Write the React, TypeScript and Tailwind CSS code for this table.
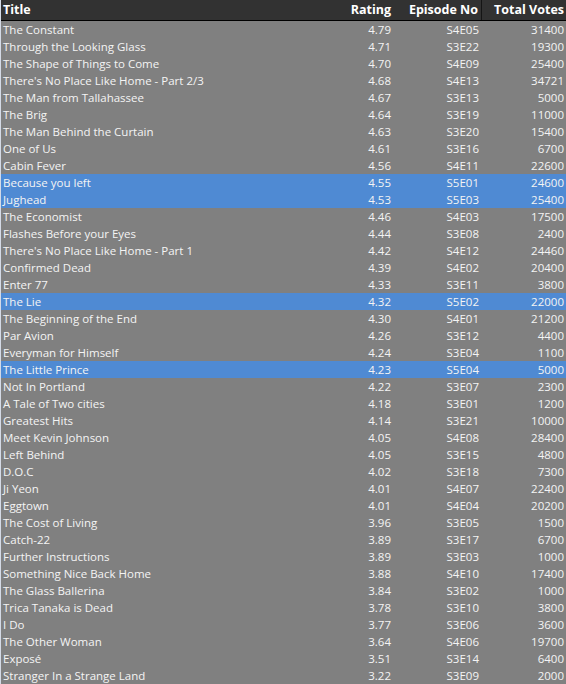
import React from "react";

type Row = [string, string, string, string, boolean?];

const rows: Row[] = [
  ["The Constant", "4.79", "S4E05", "31400"],
  ["Through the Looking Glass", "4.71", "S3E22", "19300"],
  ["The Shape of Things to Come", "4.70", "S4E09", "25400"],
  ["There's No Place Like Home - Part 2/3", "4.68", "S4E13", "34721"],
  ["The Man from Tallahassee", "4.67", "S3E13", "5000"],
  ["The Brig", "4.64", "S3E19", "11000"],
  ["The Man Behind the Curtain", "4.63", "S3E20", "15400"],
  ["One of Us", "4.61", "S3E16", "6700"],
  ["Cabin Fever", "4.56", "S4E11", "22600"],
  ["Because you left", "4.55", "S5E01", "24600", true],
  ["Jughead", "4.53", "S5E03", "25400", true],
  ["The Economist", "4.46", "S4E03", "17500"],
  ["Flashes Before your Eyes", "4.44", "S3E08", "2400"],
  ["There's No Place Like Home - Part 1", "4.42", "S4E12", "24460"],
  ["Confirmed Dead", "4.39", "S4E02", "20400"],
  ["Enter 77", "4.33", "S3E11", "3800"],
  ["The Lie", "4.32", "S5E02", "22000", true],
  ["The Beginning of the End", "4.30", "S4E01", "21200"],
  ["Par Avion", "4.26", "S3E12", "4400"],
  ["Everyman for Himself", "4.24", "S3E04", "1100"],
  ["The Little Prince", "4.23", "S5E04", "5000", true],
  ["Not In Portland", "4.22", "S3E07", "2300"],
  ["A Tale of Two cities", "4.18", "S3E01", "1200"],
  ["Greatest Hits", "4.14", "S3E21", "10000"],
  ["Meet Kevin Johnson", "4.05", "S4E08", "28400"],
  ["Left Behind", "4.05", "S3E15", "4800"],
  ["D.O.C", "4.02", "S3E18", "7300"],
  ["Ji Yeon", "4.01", "S4E07", "22400"],
  ["Eggtown", "4.01", "S4E04", "20200"],
  ["The Cost of Living", "3.96", "S3E05", "1500"],
  ["Catch-22", "3.89", "S3E17", "6700"],
  ["Further Instructions", "3.89", "S3E03", "1000"],
  ["Something Nice Back Home", "3.88", "S4E10", "17400"],
  ["The Glass Ballerina", "3.84", "S3E02", "1000"],
  ["Trica Tanaka is Dead", "3.78", "S3E10", "3800"],
  ["I Do", "3.77", "S3E06", "3600"],
  ["The Other Woman", "3.64", "S4E06", "19700"],
  ["Exposé", "3.51", "S3E14", "6400"],
  ["Stranger In a Strange Land", "3.22", "S3E09", "2000"],
];

export default function App() {
  return (
    <div
      className="w-[566px] h-[684px] overflow-hidden bg-[#808080] border-l border-[#d4dae6]"
      style={{ fontFamily: '"Open Sans", "Noto Sans", sans-serif' }}
    >
      <div className="grid grid-cols-[329px_63px_89px_84px] h-[21px] bg-[#323232] border-b border-black text-white font-bold text-[12.5px] leading-[20px]">
        <div className="pl-[2px]">Title</div>
        <div className="text-right pr-[2px]">Rating</div>
        <div className="text-right pr-[3px] border-r border-[#151515]">Episode No</div>
        <div className="text-right pr-[2px]">Total Votes</div>
      </div>
      {rows.map((r, i) => (
        <div
          key={i}
          className={
            "grid grid-cols-[329px_63px_89px_84px] h-[17px] text-[11.5px] leading-[17px] text-[#f4f4f4] " +
            (r[4] ? "bg-[#4f8ad3]" : "bg-[#808080]")
          }
        >
          <div className="pl-[2px] whitespace-nowrap">{r[0]}</div>
          <div className="text-right pr-[2px]">{r[1]}</div>
          <div className="text-right pr-[3px]">{r[2]}</div>
          <div className="text-right pr-[2px]">{r[3]}</div>
        </div>
      ))}
    </div>
  );
}
